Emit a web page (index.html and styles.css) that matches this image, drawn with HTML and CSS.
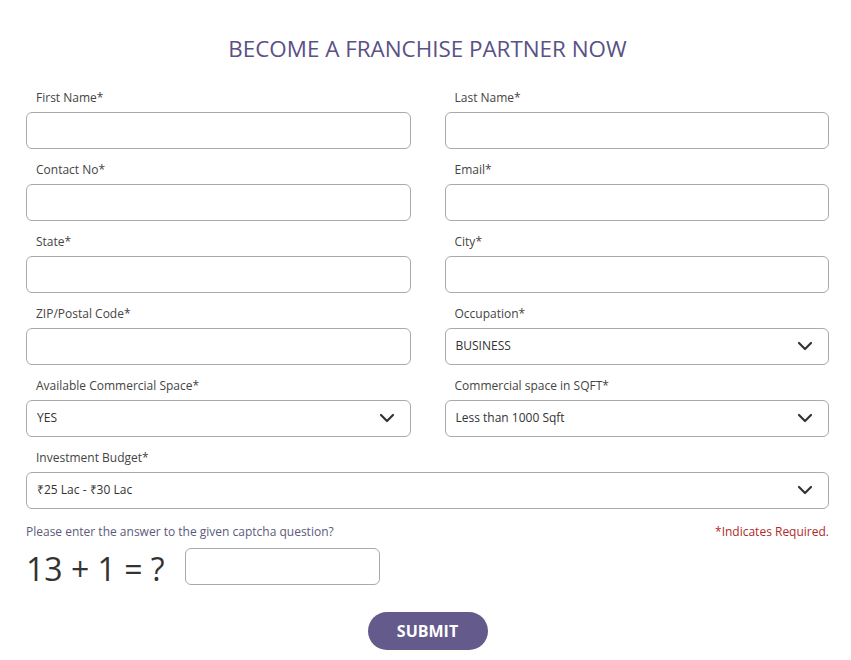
FILE: index.html
```html
<!DOCTYPE html>
<html lang="en">
<head>
<meta charset="UTF-8">
<meta name="viewport" content="width=device-width, initial-scale=1.0">
<title>Become a Franchise Partner</title>
<link rel="stylesheet" href="styles.css">
</head>
<body>

<h2 class="title">BECOME A FRANCHISE PARTNER NOW</h2>

<form class="franchise-form">
  <div class="grid">
    <div class="field">
      <label for="firstName">First Name*</label>
      <input type="text" id="firstName" name="firstName">
    </div>
    <div class="field">
      <label for="lastName">Last Name*</label>
      <input type="text" id="lastName" name="lastName">
    </div>
    <div class="field">
      <label for="contact">Contact No*</label>
      <input type="text" id="contact" name="contact">
    </div>
    <div class="field">
      <label for="email">Email*</label>
      <input type="text" id="email" name="email">
    </div>
    <div class="field">
      <label for="state">State*</label>
      <input type="text" id="state" name="state">
    </div>
    <div class="field">
      <label for="city">City*</label>
      <input type="text" id="city" name="city">
    </div>
    <div class="field">
      <label for="zip">ZIP/Postal Code*</label>
      <input type="text" id="zip" name="zip">
    </div>
    <div class="field">
      <label for="occupation">Occupation*</label>
      <div class="select-wrap">
        <select id="occupation" name="occupation">
          <option>BUSINESS</option>
          <option>SERVICE</option>
        </select>
        <svg class="chevron" width="16" height="10" viewBox="0 0 16 10"><path d="M2 2l6 6 6-6" fill="none" stroke="#333" stroke-width="2.2" stroke-linecap="round" stroke-linejoin="round"/></svg>
      </div>
    </div>
    <div class="field">
      <label for="space">Available Commercial Space*</label>
      <div class="select-wrap">
        <select id="space" name="space">
          <option>YES</option>
          <option>NO</option>
        </select>
        <svg class="chevron" width="16" height="10" viewBox="0 0 16 10"><path d="M2 2l6 6 6-6" fill="none" stroke="#333" stroke-width="2.2" stroke-linecap="round" stroke-linejoin="round"/></svg>
      </div>
    </div>
    <div class="field">
      <label for="sqft">Commercial space in SQFT*</label>
      <div class="select-wrap">
        <select id="sqft" name="sqft">
          <option>Less than 1000 Sqft</option>
          <option>More than 1000 Sqft</option>
        </select>
        <svg class="chevron" width="16" height="10" viewBox="0 0 16 10"><path d="M2 2l6 6 6-6" fill="none" stroke="#333" stroke-width="2.2" stroke-linecap="round" stroke-linejoin="round"/></svg>
      </div>
    </div>
    <div class="field wide">
      <label for="budget">Investment Budget*</label>
      <div class="select-wrap">
        <select id="budget" name="budget">
          <option>₹25 Lac - ₹30 Lac</option>
        </select>
        <svg class="chevron" width="16" height="10" viewBox="0 0 16 10"><path d="M2 2l6 6 6-6" fill="none" stroke="#333" stroke-width="2.2" stroke-linecap="round" stroke-linejoin="round"/></svg>
      </div>
    </div>
  </div>

  <div class="captcha-head">
    <span class="captcha-note">Please enter the answer to the given captcha question?</span>
    <span class="required">*Indicates Required.</span>
  </div>
  <div class="captcha-row">
    <span class="equation">13 + 1 = ?</span>
    <input type="text" class="captcha-input" name="captcha">
  </div>

  <div class="actions">
    <button type="button" class="submit">SUBMIT</button>
  </div>
</form>

</body>
</html>
```

FILE: styles.css
```css
body {
  font-family: "Open Sans", Arial, sans-serif;
  margin: 0;
  padding: 34px 22px 0 26px;
  background-color: #fff;
  color: #444;
}
.title {
  margin: 0 0 24px;
  font-size: 22.4px;
  line-height: 30px;
  font-weight: 400;
  text-align: center;
  color: #5a5185;
}
.grid {
  display: grid;
  grid-template-columns: 1fr 1fr;
  column-gap: 34px;
}
.field {
  padding-bottom: 11px;
}
.field.wide {
  grid-column: 1 / span 2;
  padding-bottom: 0;
}
label {
  display: block;
  padding-left: 10px;
  margin-bottom: 4px;
  font-size: 12px;
  line-height: 20px;
  color: #444;
}
input,select {
  display: block;
  width: 100%;
  height: 37px;
  padding: 0 10px 2px;
  border: 1px solid #aaa;
  border-radius: 6px;
  box-sizing: border-box;
  background: #fff;
  font-family: "Open Sans", Arial, sans-serif;
  font-size: 12px;
  color: #333;
  outline: none;
}
select {
  appearance: none;
  -webkit-appearance: none;
}
.select-wrap {
  position: relative;
}
.chevron {
  position: absolute;
  right: 16px;
  top: 13px;
  pointer-events: none;
}
.captcha-head {
  display: flex;
  justify-content: space-between;
  margin-top: 14px;
  font-size: 12px;
  line-height: 18px;
}
.captcha-note {
  color: #5c5a7c;
}
.required {
  color: #b02a2a;
}
.captcha-row {
  display: flex;
  align-items: center;
  gap: 20px;
  margin-top: 5px;
}
.equation {
  font-size: 32px;
  line-height: 37px;
  color: #333;
  padding-top: 4px;
}
.captcha-input {
  width: 195px;
}
.actions {
  display: flex;
  justify-content: center;
  margin-top: 25px;
}
.submit {
  width: 120px;
  height: 38px;
  background-color: #645a8c;
  color: #fff;
  border: none;
  border-radius: 19px;
  font-family: "Open Sans", Arial, sans-serif;
  font-size: 16px;
  font-weight: 700;
  cursor: pointer;
}
```
